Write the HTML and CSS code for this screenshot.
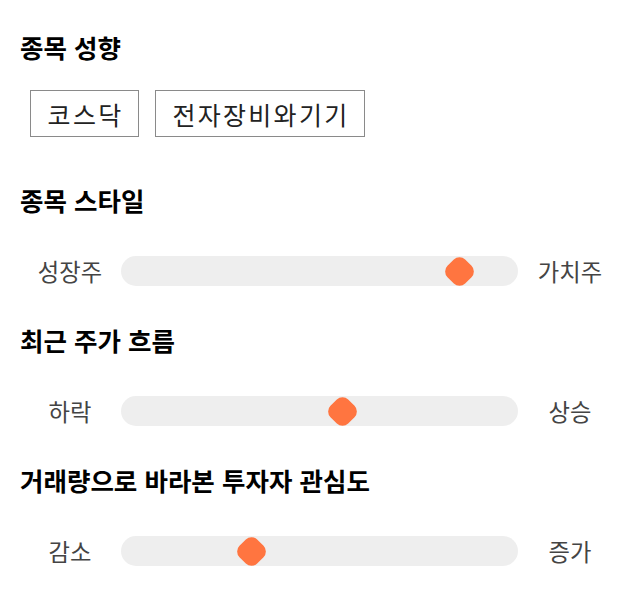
FILE: index.html
```html
<!DOCTYPE html>
<html lang="ko">
<head>
<meta charset="utf-8">
<link rel="stylesheet" href="styles.css">
</head>
<body>
<main class="page">
  <section class="sec sec-first">
    <h2 class="title">종목 성향</h2>
    <div class="chips">
      <span class="chip">코스닥</span>
      <span class="chip">전자장비와기기</span>
    </div>
  </section>
  <section class="sec">
    <h2 class="title">종목 스타일</h2>
    <div class="slider">
      <span class="lbl">성장주</span>
      <div class="track"><span class="thumb" style="left:85.2%"></span></div>
      <span class="lbl">가치주</span>
    </div>
  </section>
  <section class="sec">
    <h2 class="title">최근 주가 흐름</h2>
    <div class="slider">
      <span class="lbl">하락</span>
      <div class="track"><span class="thumb" style="left:55.7%"></span></div>
      <span class="lbl">상승</span>
    </div>
  </section>
  <section class="sec">
    <h2 class="title">거래량으로 바라본 투자자 관심도</h2>
    <div class="slider">
      <span class="lbl">감소</span>
      <div class="track"><span class="thumb" style="left:32.8%"></span></div>
      <span class="lbl">증가</span>
    </div>
  </section>
</main>
</body>
</html>
```
FILE: styles.css
```css
html, body {
  margin: 0;
  padding: 0;
  background: #fff;
}
body {
  font-family: "Noto Sans CJK KR", "Noto Sans", sans-serif;
  color: #111;
}
.page {
  padding: 31px 18px 0 20px;
  display: flex;
  flex-direction: column;
}
.sec {
  margin-bottom: 38px;
}
.sec-first {
  margin-bottom: 47px;
}
.title {
  margin: 0;
  font-size: 25.5px;
  line-height: 32px;
  font-weight: 700;
  color: #000;
}
.chips {
  display: flex;
  gap: 16px;
  margin: 27px 0 0 10px;
}
.chip {
  box-sizing: border-box;
  height: 47px;
  border: 1px solid #8a8a8a;
  padding: 0 14.3px 0 16.6px;
  display: flex;
  align-items: center;
  font-size: 25px;
  letter-spacing: 2.3px;
  color: #222;
}
.slider {
  margin-top: 40px;
  display: grid;
  grid-template-columns: 100px 1fr 104px;
  align-items: center;
  height: 30px;
}
.lbl {
  text-align: center;
  font-size: 23.3px;
  color: #444;
  line-height: 30px;
}
.track {
  position: relative;
  height: 30px;
  margin-left: 1px;
  border-radius: 15px;
  background: #eeeeee;
}
.thumb {
  position: absolute;
  top: 50%;
  width: 25px;
  height: 25px;
  margin: -12.5px 0 0 -12.5px;
  border-radius: 8px;
  background: #ff7540;
  transform: rotate(45deg);
}
```
